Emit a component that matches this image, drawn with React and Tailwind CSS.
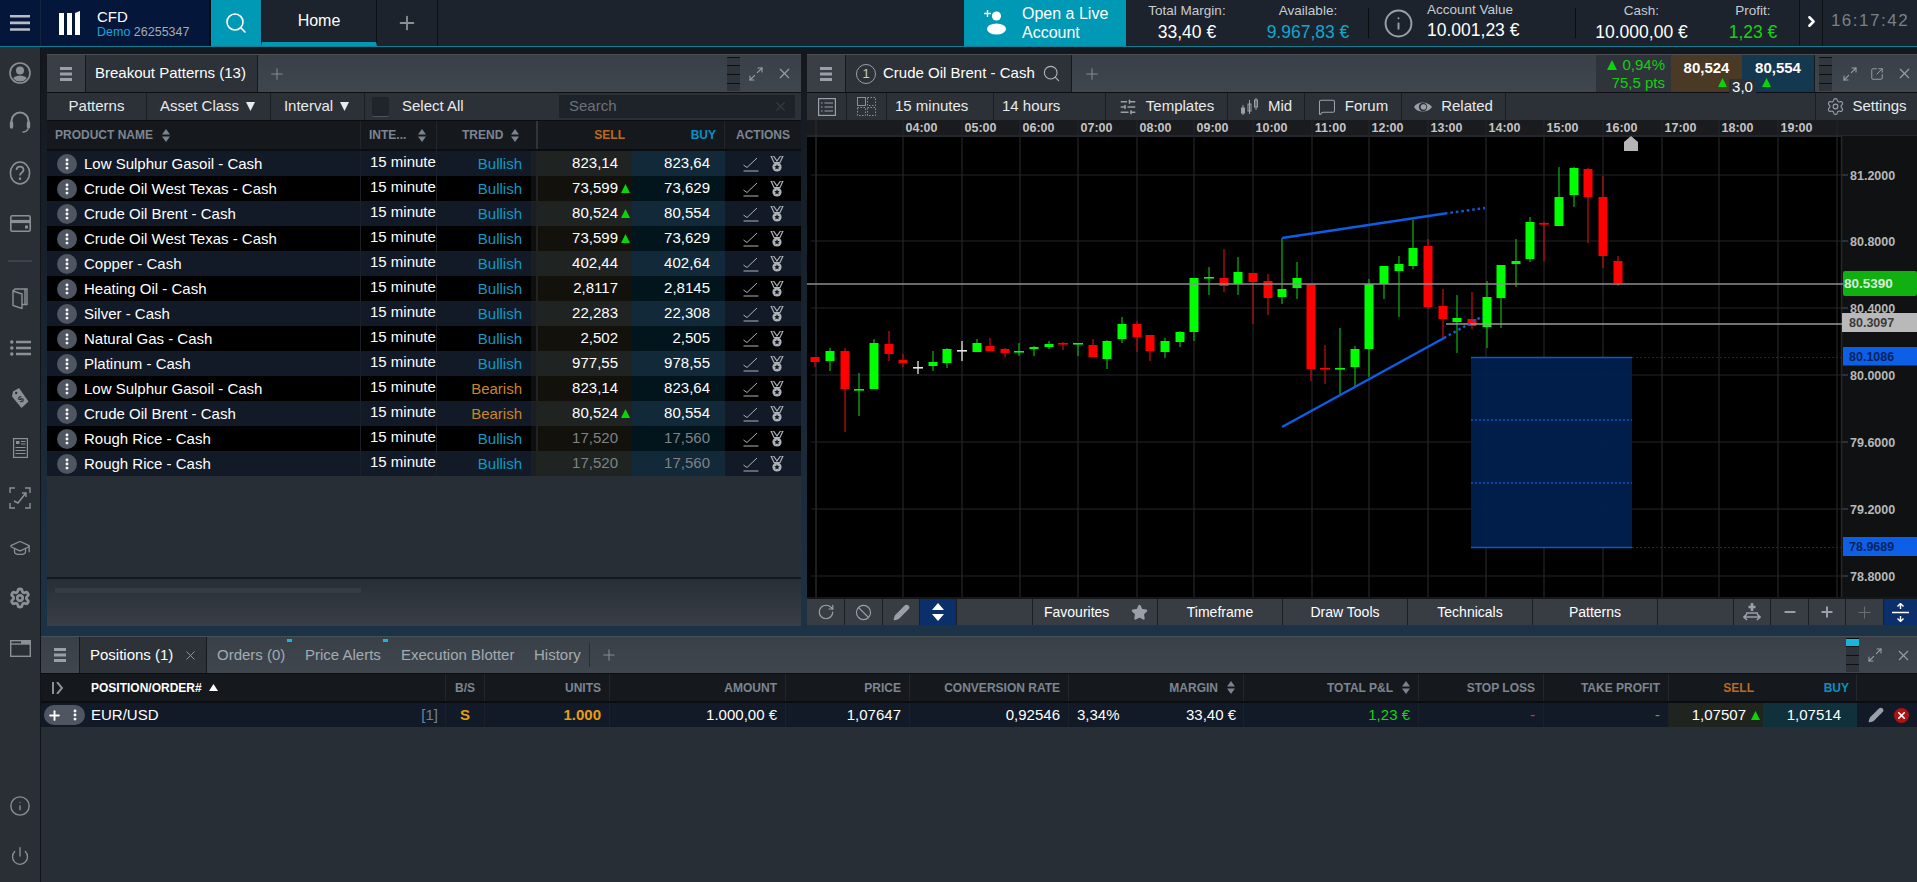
import React from 'react';
import { Search, Plus, X, Maximize2, Star, Pencil, Ban, RotateCw, Minus, SquareArrowOutUpRight, SlidersHorizontal, MessageSquare, Settings, ChevronRight, EllipsisVertical, GraduationCap, Info, Power } from 'lucide-react';

const Tri = ({ s = 9, c = '#0ad40a' }) => (
  <svg width={s} height={s} viewBox="0 0 9 9" className="shrink-0"><path d="M4.5 0L9 9H0z" fill={c} /></svg>
);
const Sort = () => (
  <svg width="8" height="13" viewBox="0 0 8 13" className="shrink-0"><path d="M4 0L8 5.5H0zM4 13L0 7.5H8z" fill="#7b838c" /></svg>
);
const Burger = () => (
  <svg width="14" height="14" viewBox="0 0 14 14"><path d="M1 0h12v3H1zM1 5.5h12v3H1zM1 11h12v3H1z" fill="#9aa0a7" /></svg>
);
const Stack = ({ top = false }) => (
  <svg width="13" height="34" viewBox="0 0 13 34" className="shrink-0">
    <rect x="0" y="0" width="13" height="8" fill={top ? '#16b6de' : '#33383f'} />
    <rect x="0" y="9" width="13" height="8" fill="#2f343a" />
    <rect x="0" y="18" width="13" height="8" fill="#2f343a" />
    <rect x="0" y="27" width="13" height="7" fill="#2f343a" />
    <path d="M0 .5h13M0 8.5h13M0 17.5h13M0 26.5h13" stroke="#0d0f12" />
  </svg>
);
const LineIcon = () => (
  <svg width="16" height="16" viewBox="0 0 16 16" fill="none" stroke="#aeb3b9" strokeWidth="1"><path d="M0.5 9l3.5 2.5L14 2M0.5 15h15" /></svg>
);
const Medal = () => (
  <svg width="14" height="16" viewBox="0 0 14 16"><path d="M1 0h2.5L7 5l3.5-5H13l-3 6.5H4z" fill="none" stroke="#aeb3b9" strokeWidth="1.2" /><circle cx="7" cy="11" r="4.6" fill="#aeb3b9" /><path d="M7 8.3l.8 1.8 1.9.2-1.4 1.3.4 1.9L7 12.5l-1.7 1 .4-1.9-1.4-1.3 1.9-.2z" fill="#14181d" /></svg>
);

const rows = [
  ['Low Sulphur Gasoil - Cash', 'Bullish', '823,14', '823,64'],
  ['Crude Oil West Texas - Cash', 'Bullish', '73,599', '73,629', 1],
  ['Crude Oil Brent - Cash', 'Bullish', '80,524', '80,554', 1],
  ['Crude Oil West Texas - Cash', 'Bullish', '73,599', '73,629', 1],
  ['Copper - Cash', 'Bullish', '402,44', '402,64'],
  ['Heating Oil - Cash', 'Bullish', '2,8117', '2,8145'],
  ['Silver - Cash', 'Bullish', '22,283', '22,308'],
  ['Natural Gas - Cash', 'Bullish', '2,502', '2,505'],
  ['Platinum - Cash', 'Bullish', '977,55', '978,55'],
  ['Low Sulphur Gasoil - Cash', 'Bearish', '823,14', '823,64'],
  ['Crude Oil Brent - Cash', 'Bearish', '80,524', '80,554', 1],
  ['Rough Rice - Cash', 'Bullish', '17,520', '17,560', 0, 1],
  ['Rough Rice - Cash', 'Bullish', '17,520', '17,560', 0, 1],
];

// cx, high, bodyTop, bodyBottom, low, colour (g, r, w). Doji when top===bottom.
const candles = [
  [815, 357, 357, 362, 367, 'r'], [830, 348, 351, 361, 371, 'g'], [845, 348, 351, 389, 432, 'r'], [859, 373, 389, 390, 416, 'g'],
  [874, 339, 343, 389, 389, 'g'], [889, 331, 344, 354, 361, 'r'], [903, 354, 360, 363, 367, 'r'], [918, 361, 367, 368, 374, 'w'],
  [933, 351, 362, 366, 371, 'g'], [947, 348, 349, 363, 368, 'g'], [962, 341, 350, 351, 361, 'w'], [977, 339, 343, 352, 352, 'g'],
  [990, 338, 346, 351, 351, 'r'], [1005, 348, 349, 353, 357, 'r'], [1019, 343, 351, 352, 356, 'g'], [1034, 346, 347, 349, 356, 'g'],
  [1049, 341, 344, 347, 349, 'g'], [1063, 342, 343, 344, 350, 'r'], [1078, 343, 343, 344, 356, 'g'], [1093, 339, 345, 357, 357, 'r'],
  [1107, 340, 341, 359, 369, 'g'], [1122, 317, 324, 339, 343, 'g'], [1137, 321, 324, 337, 352, 'r'], [1150, 335, 335, 351, 361, 'r'],
  [1165, 338, 341, 352, 358, 'g'], [1180, 331, 332, 342, 347, 'g'], [1194, 278, 278, 332, 341, 'g'], [1209, 267, 277, 278, 295, 'g'],
  [1224, 249, 278, 286, 292, 'r'], [1238, 257, 272, 284, 295, 'g'], [1253, 273, 273, 282, 324, 'r'], [1268, 274, 281, 298, 315, 'r'],
  [1282, 238, 289, 297, 304, 'g'], [1297, 262, 278, 288, 299, 'g'], [1311, 284, 284, 369, 381, 'r'], [1325, 345, 368, 369, 384, 'r'],
  [1340, 328, 368, 369, 394, 'g'], [1355, 346, 349, 367, 386, 'g'], [1369, 279, 284, 349, 377, 'g'], [1384, 266, 266, 284, 299, 'g'],
  [1399, 256, 264, 271, 317, 'g'], [1413, 220, 248, 266, 269, 'g'], [1428, 239, 246, 307, 309, 'r'], [1443, 289, 306, 319, 338, 'r'],
  [1457, 295, 318, 322, 353, 'g'], [1472, 292, 319, 326, 329, 'r'], [1487, 281, 297, 327, 348, 'g'], [1501, 265, 265, 298, 328, 'g'],
  [1516, 239, 261, 264, 287, 'g'], [1530, 217, 222, 259, 262, 'g'], [1544, 222, 223, 224, 261, 'r'], [1559, 167, 197, 226, 226, 'g'],
  [1574, 167, 168, 195, 207, 'g'], [1588, 168, 169, 197, 243, 'r'], [1603, 176, 197, 256, 268, 'r'], [1618, 256, 261, 283, 286, 'r'],
];
const col = { g: '#00ff00', r: '#ff0000', w: '#e6e6e6' };
const wick = { g: '#0fa80f', r: '#b80f0f', w: '#e6e6e6' };
const hours = ['04:00','05:00','06:00','07:00','08:00','09:00','10:00','11:00','12:00','13:00','14:00','15:00','16:00','17:00','18:00','19:00'];
const grids = [903,962,1020,1078,1137,1194,1253,1312,1369,1428,1486,1544,1603,1662,1719,1778];
const axis = [[175,'81.2000'],[241,'80.8000'],[308,'80.4000'],[375,'80.0000'],[442,'79.6000'],[509,'79.2000'],[576,'78.8000']];

function Chart() {
  return (
    <svg viewBox="807 120 1110 477" width="1110" height="477" className="block">
      <rect x="807" y="120" width="1110" height="477" fill="#000" />
      <rect x="807" y="120" width="1110" height="15" fill="#191b1e" />
      <rect x="807" y="135" width="1110" height="2" fill="#24262a" />
      <rect x="1842" y="136" width="75" height="461" fill="#0f1113" />
      <path d="M1841.5 136V597M816 120V597" stroke="#26282b" strokeWidth="1.5" />
      {grids.concat(1837).map((x) => <path key={x} d={`M${x} 120V597`} stroke="#232527" strokeWidth="1.2" />)}
      {axis.map(([y]) => <path key={y} d={`M811 ${y}H1848`} stroke="#232527" strokeWidth="1.2" />)}
      <rect x="1471" y="357" width="161" height="191" fill="#00204f" fillOpacity="0.93" />
      <path d="M1471 357.5H1632M1471 547.5H1632" stroke="#0d57c8" strokeWidth="1.5" />
      <path d="M1471 420H1632M1471 483H1632" stroke="#0d57c8" strokeWidth="1.5" strokeDasharray="2 2" />
      <path d="M1632 357.5H1843M1632 547.5H1843" stroke="#0a2a66" strokeWidth="1" strokeDasharray="2 2" />
      {candles.map(([x, h, t, b, l, c], i) => {
        const doji = b - t <= 1;
        return (
          <g key={i}>
            <path d={`M${x} ${h}V${l}`} stroke={wick[c]} strokeWidth="1.3" />
            <rect x={x - (doji ? 5 : 4.5)} y={t} width={doji ? 10 : 9} height={doji ? 1.6 : b - t} fill={col[c]} />
          </g>
        );
      })}
      <path d="M807 284H1843" stroke="#8e8e8e" strokeWidth="1.4" />
      <path d="M1446 324H1843" stroke="#9a9a9a" strokeWidth="1.4" />
      <path d="M1282 238L1445 213.5M1282 427L1444 338" stroke="#0b5fe6" strokeWidth="2.4" />
      <path d="M1445 213.5L1485 208M1444 338L1483 316" stroke="#0b5fe6" strokeWidth="2.4" strokeDasharray="2.5 3" />
      <path d="M1631 136l7 6v9h-14v-9z" fill="#b5b5b5" />
      <g fontSize="12.5" fontWeight="700" fill="#c4c4c4" textAnchor="middle">
        {hours.map((h, i) => <text key={h} x={grids[i] + 18.5} y="132">{h}</text>)}
      </g>
      <g fontSize="12.5" fontWeight="700" fill="#b8b8b8">
        {axis.map(([y, t]) => <text key={t} x="1850" y={y + 4.5}>{t}</text>)}
      </g>
      <path d="M1842 175h6M1842 241h6M1842 308h6M1842 375h6M1842 442h6M1842 509h6M1842 576h6" stroke="#44474b" />
      <rect x="1843" y="271" width="74" height="25" rx="2" fill="#0fb010" />
      <text x="1844" y="288" fontSize="13.5" fontWeight="700" fill="#d8f0d8">80.5390</text>
      <rect x="1842" y="313" width="75" height="19" fill="#b9b9b9" />
      <text x="1849" y="327" fontSize="12.5" fontWeight="700" fill="#3c3c3c">80.3097</text>
      <rect x="1843" y="347" width="74" height="18.5" fill="#0d5fe8" />
      <text x="1849" y="361" fontSize="12.5" fontWeight="700" fill="#06245c">80.1086</text>
      <rect x="1843" y="537" width="74" height="19" fill="#0d5fe8" />
      <text x="1849" y="551" fontSize="12.5" fontWeight="700" fill="#06245c">78.9689</text>
    </svg>
  );
}

const cell = 'flex items-center justify-center border-r border-[#1a1d21] h-full shrink-0';
const tabBar = 'flex items-stretch bg-gradient-to-b from-[#3a4048] to-[#40464e] border-t border-[#4a4f56] border-b border-b-[#0d0f12]';

function Side() {
  const I = ({ children }) => <div className="h-[50px] flex items-center justify-center shrink-0 text-[#8b9097]">{children}</div>;
  return (
    <div className="w-[41px] shrink-0 bg-[#2a2f35] border-r border-[#101317] flex flex-col pt-[1px]">
      <I>
        <svg width="22" height="22" viewBox="0 0 22 22"><defs><clipPath id="uc"><circle cx="11" cy="11" r="8.6" /></clipPath></defs><circle cx="11" cy="11" r="10" fill="none" stroke="currentColor" strokeWidth="1.6" /><g clipPath="url(#uc)" fill="currentColor"><circle cx="11" cy="8.5" r="4" /><ellipse cx="11" cy="19" rx="8" ry="5.5" /></g></svg>
      </I>
      <I>
        <svg width="22" height="24" viewBox="0 0 22 24" fill="none" stroke="currentColor" strokeLinecap="round"><path d="M2.5 13V10a8.5 8.5 0 0 1 17 0v3" strokeWidth="2" /><path d="M2.5 12v4M19.5 12v4" strokeWidth="3.4" /><path d="M19 18c-1 2-3 3-5 3" strokeWidth="1.6" /></svg>
      </I>
      <I>
        <svg width="22" height="24" viewBox="0 0 22 24" fill="none" stroke="currentColor"><ellipse cx="11" cy="12" rx="9.6" ry="11" strokeWidth="1.6" /><path d="M7.5 9c0-4.5 7-4.5 7 0 0 2.6-3.5 2.6-3.5 5.6" strokeWidth="1.8" /><path d="M11 16.5v2.4" strokeWidth="2.2" /></svg>
      </I>
      <I>
        <svg width="21" height="17" viewBox="0 0 21 17" fill="none" stroke="currentColor"><rect x=".8" y=".8" width="19.4" height="15.4" rx="1.5" strokeWidth="1.6" /><path d="M1 6.5h19" strokeWidth="3.2" /><rect x="15" y="10.5" width="3" height="3" fill="currentColor" stroke="none" /></svg>
      </I>
      <div className="h-[25px] flex items-center justify-center shrink-0"><div className="w-[24px] h-[2px] bg-[#3e434a]" /></div>
      <I>
        <svg width="16" height="21" viewBox="0 0 16 21" fill="none" stroke="currentColor" strokeWidth="1.4"><path d="M1 3l9 3v14.5l-9-3zM1 3l2-2h12v15.5h-5M13 1v15.5" /></svg>
      </I>
      <I>
        <svg width="21" height="16" viewBox="0 0 21 16" fill="currentColor"><circle cx="1.8" cy="2" r="1.8" /><circle cx="1.8" cy="8" r="1.8" /><circle cx="1.8" cy="14" r="1.8" /><path d="M6 .8h15v2.4H6zM6 6.8h15v2.4H6zM6 12.8h15v2.4H6z" /></svg>
      </I>
      <I>
        <svg width="19" height="22" viewBox="0 0 19 22"><path d="M2 4.5L8 1l9.5 13.5-7 6.5L1 9.5z" fill="currentColor" /><circle cx="5.2" cy="6" r="1.2" fill="#2a2f35" /><text x="9.5" y="15.5" fontSize="9" fontWeight="700" textAnchor="middle" fill="#2a2f35" transform="rotate(-35 9.5 12)">$</text></svg>
      </I>
      <I>
        <svg width="15" height="20" viewBox="0 0 15 20" fill="none" stroke="currentColor"><rect x=".6" y=".6" width="13.8" height="18.8" strokeWidth="1.2" /><rect x="3" y="3" width="3.5" height="3" fill="currentColor" stroke="none" /><path d="M8 3.5h4.5M8 6h4.5M2.5 9.5h10M2.5 12.5h10M2.5 15.5h10" strokeWidth="1.2" /></svg>
      </I>
      <I>
        <svg width="22" height="22" viewBox="0 0 22 22" fill="none" stroke="currentColor" strokeWidth="1.4"><path d="M1 6V1h5M16 1h5v5M21 16v5h-5M6 21H1v-5" /><path d="M5 14l4 2 7-9M13 6h4v4" /></svg>
      </I>
      <I><GraduationCap size={22} strokeWidth={1.4} /></I>
      <I><Settings size={22} strokeWidth={3} /></I>
      <I>
        <svg width="21" height="17" viewBox="0 0 21 17" fill="none" stroke="currentColor"><rect x=".7" y=".7" width="19.6" height="15.6" strokeWidth="1.4" /><path d="M1 4h19" strokeWidth="1.4" /><rect x="11" y="1" width="9" height="3" fill="currentColor" stroke="none" /></svg>
      </I>
      <div className="mt-auto" />
      <I><Info size={22} strokeWidth={1.5} /></I>
      <I><Power size={20} strokeWidth={1.6} /></I>
      <div className="h-[1px] shrink-0" />
    </div>
  );
}

function TopBar() {
  const M = ({ w, label, value, c = 'text-white' }) => (
    <div className={`${w} shrink-0 flex flex-col items-center pt-[2px]`}>
      <div className="text-[13.5px] leading-[18px] text-[#c8ccd1]">{label}</div>
      <div className={`text-[17.5px] leading-[24px] ${c}`}>{value}</div>
    </div>
  );
  return (
    <div className="h-[47px] shrink-0 flex bg-[#1c232c] border-b border-[#0f7f96] text-white">
      <div className="w-[41px] shrink-0 bg-[#04163a] border-r border-[#15233e] flex items-center justify-center">
        <svg width="20" height="16" viewBox="0 0 20 16"><path d="M0 0h20v2.6H0zM0 6.6h20v2.6H0zM0 13.2h20v2.6H0z" fill="#b6bdc8" /></svg>
      </div>
      <div className="w-[170px] shrink-0 bg-[#04163a] flex items-center pl-[18px] gap-[17px] border-r-2 border-[#0a0e13]">
        <svg width="21" height="24" viewBox="0 0 21 24"><path d="M0 2h5v22H0zM8 2h5v22H8zM16 2l5-2v24h-5z" fill="#fff" /></svg>
        <div className="pt-[1px]">
          <div className="text-[15px] leading-[17px]">CFD</div>
          <div className="text-[12.5px] leading-[15px]"><span className="text-[#12a7d8]">Demo</span> <span className="text-[#a4abb4]">26255347</span></div>
        </div>
      </div>
      <div className="w-[50px] shrink-0 bg-[#0099b5] flex items-center justify-center"><Search size={24} strokeWidth={1.6} /></div>
      <div className="w-[116px] shrink-0 flex items-center justify-center text-[16px] border-r border-l border-[#0d1014] border-b-[4px] border-b-[#0099b5]">Home</div>
      <div className="w-[61px] shrink-0 flex items-center justify-center border-r border-[#0d1014] text-[#8b9097]"><Plus size={22} strokeWidth={2} /></div>
      <div className="flex-1" />
      <div className="w-[162px] shrink-0 bg-[#0099b5] flex items-center pl-[19px] gap-[13px]">
        <svg width="26" height="30" viewBox="0 0 26 30"><path d="M1 5.5h7M4.5 2v7" stroke="#fff" strokeWidth="1.4" /><circle cx="13.5" cy="8" r="4.6" fill="#fff" /><ellipse cx="13.5" cy="21" rx="9.5" ry="5.6" fill="#fff" /></svg>
        <div className="text-[16px] leading-[19px]">Open a Live<br />Account</div>
      </div>
      <M w="w-[122px]" label="Total Margin:" value="33,40 €" />
      <M w="w-[120px]" label="Available:" value="9.967,83 €" c="text-[#12a7cf]" />
      <div className="w-[1px] h-[30px] self-center bg-[#0a0c0f] shrink-0" />
      <div className="w-[58px] shrink-0 flex items-center justify-center text-[#9aa0a7]"><Info size={31} strokeWidth={1.5} /></div>
      <div className="w-[148px] shrink-0 pt-[1px]">
        <div className="text-[13.5px] leading-[17px] text-[#c8ccd1]">Account Value</div>
        <div className="text-[17.5px] leading-[24px]">10.001,23 €</div>
      </div>
      <div className="w-[1px] h-[30px] self-center bg-[#0a0c0f] shrink-0" />
      <M w="w-[131px]" label="Cash:" value="10.000,00 €" />
      <M w="w-[92px]" label="Profit:" value="1,23 €" c="text-[#14d414]" />
      <div className="w-[24px] shrink-0 border-x border-[#0d1014] flex items-center justify-center pb-[4px]"><ChevronRight size={17} strokeWidth={3.5} /></div>
      <div className="w-[94px] shrink-0 flex items-center justify-center text-[17px] tracking-[1.5px] text-[#78808a] pb-[5px]">16:17:42</div>
    </div>
  );
}

function LeftPanel() {
  return (
    <div className="w-[754px] shrink-0 h-full flex flex-col bg-[#282e36]">
      <div className={`h-[39px] shrink-0 ${tabBar}`}>
        <div className="w-[39px] flex items-center justify-center bg-[#3a3f46] border-r border-[#15181c]"><Burger /></div>
        <div className="w-[172px] flex items-center pl-[9px] bg-[#2d3238] border-r border-[#15181c] text-[15px] text-white">Breakout Patterns (13)</div>
        <div className="w-[38px] flex items-center justify-center text-[#868c93]"><Plus size={18} strokeWidth={1.4} /></div>
        <div className="flex-1" />
        <div className="flex items-center pr-[8px]">
          <Stack />
          <Maximize2 size={16} strokeWidth={1.6} className="text-[#9aa0a7] ml-[8px]" />
          <X size={17} strokeWidth={1.5} className="text-[#9aa0a7] ml-[12px]" />
        </div>
      </div>
      <div className="h-[27px] shrink-0 flex bg-[#2c3137] text-[15px] text-[#e8eaec]">
        <div className={`w-[100px] ${cell}`}>Patterns</div>
        <div className={`w-[124px] gap-[7px] pr-[2px] ${cell}`}>Asset Class <svg width="9" height="9" viewBox="0 0 9 9"><path d="M0 0h9L4.5 9z" fill="#e8eaec" /></svg></div>
        <div className={`w-[94px] gap-[7px] pr-[2px] ${cell}`}>Interval <svg width="9" height="9" viewBox="0 0 9 9"><path d="M0 0h9L4.5 9z" fill="#e8eaec" /></svg></div>
        <div className="w-[16px] flex items-center shrink-0 ml-[7px]"><div className="w-[17px] h-[20px] bg-[#20252b] border-b border-[#50555c] rounded-[2px] shrink-0" /></div>
        <div className="w-[171px] pl-[14px] flex items-center shrink-0">Select All</div>
        <div className="w-[236px] h-[23px] self-center bg-[#1e2329] flex items-center justify-between pl-[10px] pr-[7px] text-[#6b7178] shrink-0">Search <X size={15} className="text-[#34393f]" /></div>
      </div>
      <div className="grid grid-cols-[314px_76px_94px_7px_94px_93px_76px] h-[31px] shrink-0 bg-[#15191e] border-b-2 border-[#0b0d10] border-t border-t-[#0b0d10] text-[12px] font-bold text-[#7d8590]">
        <div className="flex items-center pl-[8px] gap-[9px] border-r border-[#22262b]">PRODUCT NAME <Sort /></div>
        <div className="flex items-center pl-[8px] gap-[12px] border-r border-[#22262b]">INTE... <Sort /></div>
        <div className="flex items-center pl-[25px] gap-[8px]">TREND <Sort /></div>
        <div className="border-r-2 border-[#30353b]" />
        <div className="flex items-center justify-end pr-[7px] text-[#bb6a1e]">SELL</div>
        <div className="flex items-center justify-end pr-[8px] text-[#0b8fc4] border-r border-[#22262b]">BUY</div>
        <div className="flex items-center justify-center">ACTIONS</div>
      </div>
      {rows.map(([name, trend, sell, buy, up, dim], i) => {
        const odd = i % 2 === 0;
        return (
          <div key={i} className={`grid grid-cols-[314px_76px_94px_7px_94px_93px_76px] h-[25px] shrink-0 items-stretch text-[15px] leading-[25px] text-white ${odd ? 'bg-[#121a27]' : 'bg-black'}`}>
            <div className="flex items-center pl-[10px] gap-[7px] border-r border-[#1c2129]">
              <div className="w-[20px] h-[20px] rounded-full bg-[#4f5661] flex items-center justify-center shrink-0"><EllipsisVertical size={14} strokeWidth={3} /></div>
              <span>{name}</span>
            </div>
            <div className="pl-[9px] whitespace-nowrap border-r border-[#1c2129] -mt-[2px]">15 minute</div>
            <div className={`pr-[9px] text-right ${trend === 'Bullish' ? 'text-[#0d9cc5]' : 'text-[#c98723]'}`}>{trend}</div>
            <div className={`${odd ? 'bg-[#1a1f24]' : 'bg-[#0c0e10]'} border-r-2 border-[#222]`} />
            <div className={`flex items-center justify-end pr-[2px] gap-[3px] ${odd ? 'bg-[#1f2322]' : 'bg-[#12110c]'} ${dim ? 'text-[#7e8286]' : ''}`}>
              <span className="-mt-[2px]">{sell}</span>
              <span className="w-[9px] flex">{up ? <Tri /> : null}</span>
            </div>
            <div className={`flex items-center justify-end pr-[15px] ${odd ? 'bg-[#12293a]' : 'bg-[#02151d]'} ${dim ? 'text-[#7e8286]' : ''}`}><span className="-mt-[2px]">{buy}</span></div>
            <div className="flex items-center justify-center gap-[11px]"><LineIcon /><Medal /></div>
          </div>
        );
      })}
      <div className="flex-1 border-b-2 border-[#15181c]" />
      <div className="h-[47px] shrink-0 bg-gradient-to-b from-[#282e36] to-[#3a3f46] pl-[8px] pt-[9px]">
        <div className="w-[306px] h-[5px] bg-[#373c43]" />
      </div>
    </div>
  );
}

function RightPanel() {
  const C = ({ w, children, cls = '' }) => <div className={`${w} gap-[9px] ${cell} ${cls}`}>{children}</div>;
  const Ib = ({ w, children, cls = 'text-[#9aa0a7]' }) => <div className={`${w} ${cell} ${cls}`}>{children}</div>;
  return (
    <div className="flex-1 min-w-0 h-full flex flex-col">
      <div className={`h-[39px] shrink-0 ${tabBar}`}>
        <div className="w-[39px] flex items-center justify-center bg-[#3a3f46] border-r border-[#15181c]"><Burger /></div>
        <div className="w-[226px] flex items-center pl-[10px] bg-[#2d3238] border-r border-[#15181c] text-[15px] text-white gap-[7px]">
          <div className="w-[20px] h-[20px] rounded-full border border-[#9aa0a7] flex items-center justify-center text-[13px] text-[#c8ccd1] shrink-0">1</div>
          <span className="whitespace-nowrap">Crude Oil Brent - Cash</span>
          <Search size={19} strokeWidth={1.4} className="text-[#b0b5bb] shrink-0" />
        </div>
        <div className="w-[40px] flex items-center justify-center text-[#868c93]"><Plus size={18} strokeWidth={1.4} /></div>
        <div className="flex-1" />
        <div className="w-[75px] bg-[#2f343a] flex flex-col items-end justify-center pr-[6px] text-[15px] leading-[18px] text-[#0fd00f]">
          <div className="flex items-center gap-[5px]"><Tri s={10} /><span>0,94%</span></div>
          <div>75,5 pts</div>
        </div>
        <div className="w-[71px] bg-[#4a3924] flex flex-col items-center pt-[4px] text-[15px] font-bold leading-[18px] text-white">
          80,524
          <div className="self-end pr-[15px] pt-[1px]"><Tri /></div>
        </div>
        <div className="w-[73px] bg-[#14384f] border-r border-[#15181c] flex flex-col items-center pt-[4px] text-[15px] font-bold leading-[18px] text-white relative">
          80,554
          <div className="self-start pl-[20px] pt-[1px]"><Tri /></div>
          <div className="absolute -left-[13px] top-[24px] w-[27px] h-[14px] bg-[#2b3036] rounded-t-[2px] text-[15px] leading-[15px] font-normal text-center">3,0</div>
        </div>
        <div className="w-[102px] shrink-0 flex items-center pl-[4px]">
          <Stack />
          <Maximize2 size={16} strokeWidth={1.6} className="text-[#9aa0a7] ml-[10px] shrink-0" />
          <SquareArrowOutUpRight size={14} strokeWidth={1.6} className="text-[#9aa0a7] ml-[12px] shrink-0" />
          <X size={17} strokeWidth={1.5} className="text-[#9aa0a7] ml-[12px] shrink-0" />
        </div>
      </div>
      <div className="h-[27px] shrink-0 flex bg-[#2c3137] text-[15px] text-[#e8eaec]">
        <Ib w="w-[40px]"><svg width="18" height="18" viewBox="0 0 18 18" fill="none" stroke="#9aa0a7" strokeWidth="1.2"><rect x=".6" y=".6" width="16.8" height="16.8" /><path d="M3 5h1.6M6.5 5H15M3 9h1.6M6.5 9H15M3 13h1.6M6.5 13H15" /></svg></Ib>
        <Ib w="w-[40px]"><svg width="19" height="19" viewBox="0 0 19 19" fill="none" stroke="#8b9097"><rect x=".5" y=".5" width="8" height="8" /><path strokeDasharray="1.5 1.5" d="M10.5.5h8v8h-8zM.5 10.5h8v8h-8zM10.5 10.5h8v8h-8z" /></svg></Ib>
        <C w="w-[107px] !justify-start pl-[8px]">15 minutes</C>
        <C w="w-[112px] !justify-start pl-[8px]">14 hours</C>
        <C w="w-[122px]"><SlidersHorizontal size={18} className="text-[#9aa0a7]" />Templates</C>
        <C w="w-[77px]">
          <svg width="19" height="19" viewBox="0 0 19 19" fill="none" stroke="#9aa0a7"><path d="M3 8v10M9.5 3v14M16 1v12" /><rect x="1.5" y="11" width="3" height="5" fill="#9aa0a7" /><rect x="8" y="7" width="3" height="7" /><rect x="14.5" y="3" width="3" height="7" /></svg>
          Mid
        </C>
        <C w="w-[97px]"><MessageSquare size={18} strokeWidth={1.4} className="text-[#9aa0a7]" />Forum</C>
        <C w="w-[104px]">
          <svg width="18" height="14" viewBox="0 0 18 14"><path d="M0 7c3-6 14-6 18 0-4 6-15 6-18 0z" fill="#9aa0a7" /><circle cx="9" cy="7" r="4.2" fill="#2c3137" /><circle cx="9.5" cy="7" r="2.8" fill="#9aa0a7" /></svg>
          Related
        </C>
        <div className="flex-1" />
        <div className="w-[102px] shrink-0 border-l border-[#1a1d21] flex items-center justify-center gap-[7px]"><Settings size={19} strokeWidth={1.4} className="text-[#9aa0a7]" />Settings</div>
      </div>
      <Chart />
      <div className="h-[2px] shrink-0 bg-[#14171b]" />
      <div className="h-[26px] shrink-0 flex bg-[#383d44] text-[14px] text-white">
        <Ib w="w-[38px]"><RotateCw size={18} strokeWidth={1.6} /></Ib>
        <Ib w="w-[38px]"><Ban size={17} strokeWidth={1.6} /></Ib>
        <Ib w="w-[37px]"><Pencil size={17} fill="currentColor" /></Ib>
        <Ib w="w-[37px]" cls="bg-[#0b2f6a] text-white"><svg width="14" height="18" viewBox="0 0 14 18"><path d="M7 0l6 7H1zM7 18l6-7H1z" fill="#fff" /><path d="M1 7.5h12M1 10.5h12" stroke="#0b2f6a" /></svg></Ib>
        <div className={`w-[76px] ${cell}`} />
        <div className={`w-[125px] ${cell} !justify-between pl-[11px] pr-[9px]`}><span>Favourites</span><Star size={17} fill="#9aa0a7" className="text-[#9aa0a7]" /></div>
        <div className={`w-[125px] ${cell}`}>Timeframe</div>
        <div className={`w-[125px] ${cell}`}>Draw Tools</div>
        <div className={`w-[125px] ${cell}`}>Technicals</div>
        <div className={`w-[125px] ${cell}`}>Patterns</div>
        <div className={`w-[76px] ${cell}`} />
        <Ib w="w-[37px]"><svg width="18" height="20" viewBox="0 0 18 20" fill="none" stroke="#9aa0a7" strokeWidth="1.6"><path d="M9 1v8M5.5 5h7" strokeWidth="2.6" /><path d="M1 15h16M4 12l-3 3 3 3M14 12l3 3-3 3M3 11h12" /></svg></Ib>
        <Ib w="w-[38px]"><Minus size={16} strokeWidth={3} /></Ib>
        <Ib w="w-[37px]"><Plus size={16} strokeWidth={3} /></Ib>
        <Ib w="w-[38px]" cls="text-[#6a7077]"><Plus size={19} strokeWidth={1.2} /></Ib>
        <div className="flex-1 bg-[#0b2f6a] flex items-center justify-center"><svg width="17" height="19" viewBox="0 0 17 19" fill="none" stroke="#fff" strokeWidth="1.4"><path d="M0 9.5h17M8.5 1v5M5.5 3.5l3-3 3 3M8.5 13v5M5.5 15.5l3 3 3-3" /></svg></div>
      </div>
    </div>
  );
}

function BottomPanel() {
  const cols = 'grid-cols-[405px_39px_125px_176px_124px_159px_175px_175px_125px_125px_188px_60px]';
  const hc = 'flex items-center justify-end pr-[8px] border-r border-[#23272c]';
  const bc = 'flex items-center justify-end pr-[8px] border-r border-[#1c2129]';
  return (
    <div className="flex-1 min-h-0 flex flex-col bg-[#282e36]">
      <div className={`h-[38px] shrink-0 ${tabBar} text-[15px] text-[#a4abb3]`}>
        <div className="w-[39px] flex items-center justify-center border-r border-[#15181c]"><Burger /></div>
        <div className="w-[127px] flex items-center pl-[10px] gap-[10px] bg-[#2d3238] border-r border-[#15181c] text-white">Positions (1) <X size={15} strokeWidth={1.4} className="text-[#9aa0a7]" /></div>
        <div className="w-[88px] pl-[10px] flex items-center relative">Orders (0)<div className="absolute right-[3px] top-[2px] w-[5px] h-[3px] bg-[#16b6de]" /></div>
        <div className="w-[96px] pl-[10px] flex items-center relative whitespace-nowrap">Price Alerts<div className="absolute right-[3px] top-[2px] w-[5px] h-[3px] bg-[#16b6de]" /></div>
        <div className="w-[133px] pl-[10px] flex items-center whitespace-nowrap">Execution Blotter</div>
        <div className="w-[66px] pl-[10px] flex items-center border-r border-[#2a2e33] my-[6px]">History</div>
        <div className="w-[38px] flex items-center justify-center text-[#868c93]"><Plus size={18} strokeWidth={1.4} /></div>
        <div className="flex-1" />
        <div className="flex items-center pr-[5px]">
          <Stack top />
          <Maximize2 size={16} strokeWidth={1.6} className="text-[#9aa0a7] ml-[8px]" />
          <X size={17} strokeWidth={1.5} className="text-[#9aa0a7] ml-[12px]" />
        </div>
      </div>
      <div className={`grid ${cols} h-[29px] shrink-0 bg-[#15191e] border-b-2 border-[#0b0d10] text-[12px] font-bold text-[#7d8590]`}>
        <div className="flex items-center border-r border-[#23272c] text-white">
          <svg width="12" height="12" viewBox="0 0 12 12" className="ml-[11px] mr-[27px] shrink-0"><path d="M1 0v12M5 0l5 6-5 6" fill="none" stroke="#8b9097" strokeWidth="2" /></svg>
          POSITION/ORDER#
          <svg width="9" height="7" viewBox="0 0 9 7" className="ml-[7px]"><path d="M4.5 0L9 7H0z" fill="#fff" /></svg>
        </div>
        <div className="flex items-center justify-center border-r border-[#23272c]">B/S</div>
        <div className={hc}>UNITS</div>
        <div className={hc}>AMOUNT</div>
        <div className={hc}>PRICE</div>
        <div className={`${hc} whitespace-nowrap`}>CONVERSION RATE</div>
        <div className={`${hc} gap-[9px]`}>MARGIN <Sort /></div>
        <div className={`${hc} gap-[9px]`}>TOTAL P&amp;L <Sort /></div>
        <div className={hc}>STOP LOSS</div>
        <div className={hc}>TAKE PROFIT</div>
        <div className="grid grid-cols-[94px_94px] border-r border-[#23272c]">
          <div className="flex items-center justify-end pr-[9px] text-[#bb6a1e]">SELL</div>
          <div className="flex items-center justify-end pr-[8px] text-[#0b8fc4]">BUY</div>
        </div>
        <div />
      </div>
      <div className={`grid ${cols} h-[24px] shrink-0 bg-[#121a27] text-[15px] text-white`}>
        <div className="flex items-center border-r border-[#1c2129]">
          <div className="ml-[3px] w-[41px] h-[20px] rounded-full bg-[#4f5661] flex items-center justify-center gap-[6px] shrink-0">
            <Plus size={15} strokeWidth={3} /><EllipsisVertical size={14} strokeWidth={3} />
          </div>
          <span className="ml-[6px]">EUR/USD</span>
          <span className="ml-auto pr-[7px] text-[#6f8296]">[1]</span>
        </div>
        <div className="flex items-center justify-center font-bold text-[#e79c13] border-r border-[#1c2129]">S</div>
        <div className={`${bc} font-bold text-[#e79c13]`}>1.000</div>
        <div className={bc}>1.000,00 €</div>
        <div className={bc}>1,07647</div>
        <div className={bc}>0,92546</div>
        <div className="flex items-center justify-between pl-[8px] pr-[7px] border-r border-[#1c2129]"><span>3,34%</span><span>33,40 €</span></div>
        <div className={`${bc} text-[#14d414]`}>1,23 €</div>
        <div className={`${bc} text-[#ff2020]`}>-</div>
        <div className={`${bc} text-[#14d414]`}>-</div>
        <div className="grid grid-cols-[94px_94px]">
          <div className="flex items-center justify-end pr-[3px] gap-[5px] bg-[#20241f]">1,07507 <Tri /></div>
          <div className="flex items-center justify-end pr-[16px] bg-[#10303c]">1,07514</div>
        </div>
        <div className="flex items-center pl-[11px] gap-[10px]">
          <Pencil size={16} fill="#9aa0a7" className="text-[#9aa0a7]" />
          <div className="w-[15px] h-[15px] rounded-full bg-[#b01212] flex items-center justify-center"><X size={11} strokeWidth={3.5} /></div>
        </div>
      </div>
    </div>
  );
}

export default function App() {
  return (
    <div className="w-[1917px] h-[882px] overflow-hidden flex flex-col bg-[#282e36] font-['Liberation_Sans',Arial,sans-serif]">
      <TopBar />
      <div className="flex-1 min-h-0 flex">
        <Side />
        <div className="flex-1 min-w-0 flex flex-col">
          <div className="h-[589px] shrink-0 pt-[7px] pl-[6px] pb-[10px] flex gap-[6px] bg-gradient-to-b from-[#14181d] to-[#1c3347]">
            <LeftPanel />
            <RightPanel />
          </div>
          <BottomPanel />
        </div>
      </div>
    </div>
  );
}
